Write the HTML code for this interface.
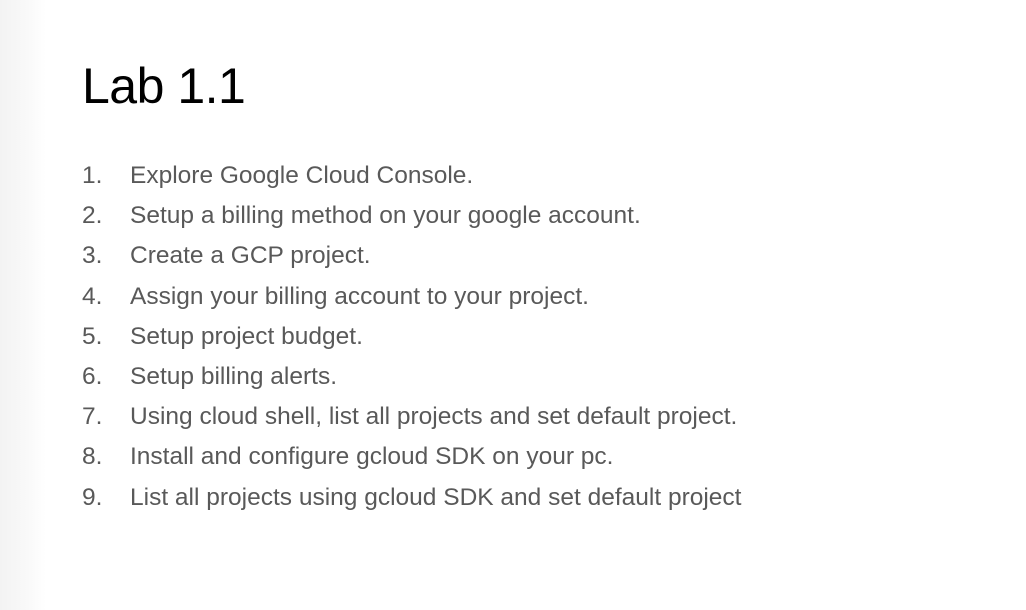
<!DOCTYPE html>
<html><head><style>
html,body{margin:0;padding:0;width:1026px;height:610px;overflow:hidden;background:#fff}
body{position:relative;font-family:"Liberation Sans",Arial,sans-serif}
.g{position:absolute;left:0;top:0;width:46px;height:610px;background:linear-gradient(to right,#f3f3f3,#f9f9f9 60%,#fff)}
h1{position:absolute;left:82px;top:56px;margin:0;font-weight:normal;font-size:50px;letter-spacing:-0.5px;line-height:60px;color:#000}
.l{position:absolute;left:0;top:2px;font-size:24.5px;color:#595959}
.r{position:absolute;height:40px;line-height:28px}
.n{position:absolute;left:82px}
.t{position:absolute;left:130px;white-space:nowrap}
</style></head><body>
<div class="g"></div>
<h1>Lab 1.1</h1>
<div class="l">
<div class="r" style="top:160px"><span class="n">1.</span><span class="t">Explore Google Cloud Console.</span></div>
<div class="r" style="top:200px"><span class="n">2.</span><span class="t">Setup a billing method on your google account.</span></div>
<div class="r" style="top:240px"><span class="n">3.</span><span class="t">Create a GCP project.</span></div>
<div class="r" style="top:281px"><span class="n">4.</span><span class="t">Assign your billing account to your project.</span></div>
<div class="r" style="top:321px"><span class="n">5.</span><span class="t">Setup project budget.</span></div>
<div class="r" style="top:361px"><span class="n">6.</span><span class="t">Setup billing alerts.</span></div>
<div class="r" style="top:401px"><span class="n">7.</span><span class="t">Using cloud shell, list all projects and set default project.</span></div>
<div class="r" style="top:441px"><span class="n">8.</span><span class="t">Install and configure gcloud SDK on your pc.</span></div>
<div class="r" style="top:482px"><span class="n">9.</span><span class="t">List all projects using gcloud SDK and set default project</span></div>
</div>
</body></html>
